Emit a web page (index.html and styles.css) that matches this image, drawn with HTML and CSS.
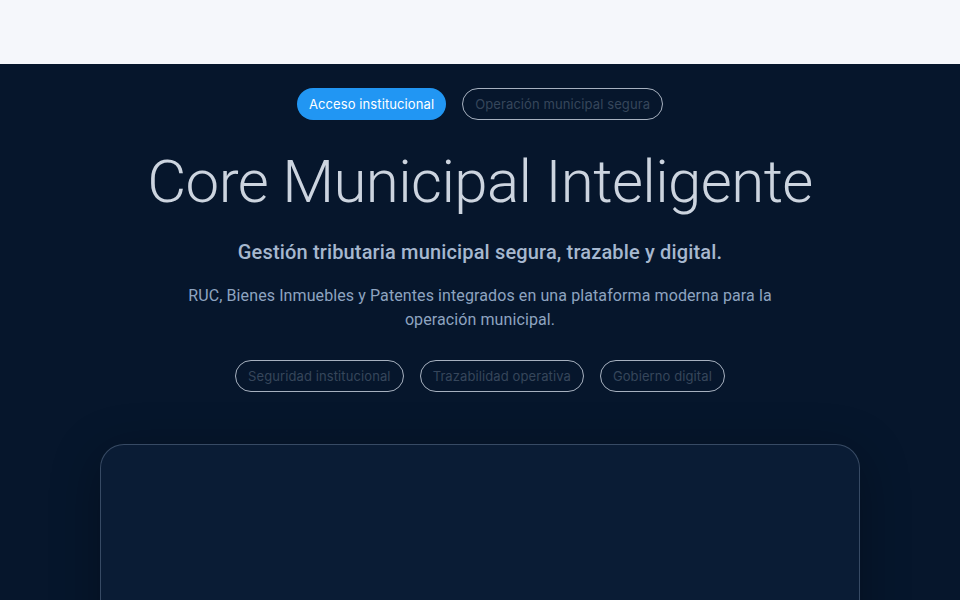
FILE: index.html
```html
<!DOCTYPE html>
<html lang="es">
<head>
<meta charset="utf-8">
<title>Core Municipal Inteligente</title>
<link rel="stylesheet" href="styles.css">
</head>
<body>
<header class="topbar"></header>
<section class="hero">
  <div class="badges">
    <span class="pill pill-primary">Acceso institucional</span>
    <span class="pill pill-outline">Operación municipal segura</span>
  </div>
  <h1 class="title">Core Municipal Inteligente</h1>
  <p class="subtitle">Gestión tributaria municipal segura, trazable y digital.</p>
  <p class="lead">RUC, Bienes Inmuebles y Patentes integrados en una plataforma moderna para la operación municipal.</p>
  <div class="chips">
    <span class="pill pill-outline">Seguridad institucional</span>
    <span class="pill pill-outline">Trazabilidad operativa</span>
    <span class="pill pill-outline">Gobierno digital</span>
  </div>
  <div class="card"></div>
</section>
</body>
</html>
```
FILE: styles.css
```css
* { box-sizing: border-box; }
html, body { margin: 0; padding: 0; }
body {
  font-family: Roboto, "Liberation Sans", sans-serif;
  background: #06162c;
  overflow: hidden;
  height: 600px;
}
.topbar {
  height: 64px;
  background: #f5f7fb;
}
.hero {
  background: #06162c;
  display: flex;
  flex-direction: column;
  align-items: center;
  padding-top: 24px;
  min-height: 536px;
}
.badges, .chips {
  display: flex;
  gap: 16px;
  justify-content: center;
}
.pill {
  display: inline-flex;
  align-items: center;
  height: 32px;
  padding: 0 12px;
  border-radius: 16px;
  font-family: Inter, "Noto Sans", sans-serif;
  font-size: 13px;
  letter-spacing: 0.1px;
  white-space: nowrap;
}
.pill-primary {
  background: #2196f3;
  color: #ffffff;
}
.pill-outline {
  border: 1px solid rgba(220, 228, 240, 0.75);
  color: #36465b;
}
.title {
  margin: 24px 0 0;
  font-weight: 300;
  font-size: 60px;
  line-height: 76px;
  color: #ccd4df;
  letter-spacing: -0.6px;
}
.subtitle {
  margin: 18px 0 0;
  font-size: 20px;
  font-weight: 500;
  line-height: 28px;
  letter-spacing: 0.15px;
  color: #a6b8cf;
}
.lead {
  margin: 18px 0 0;
  max-width: 600px;
  text-align: center;
  font-size: 16px;
  line-height: 24px;
  letter-spacing: 0.1px;
  color: #8ea4c0;
}
.chips { margin-top: 28px; }
.card {
  margin-top: 52px;
  width: 760px;
  height: 300px;
  border-radius: 24px;
  border: 1px solid rgba(140, 160, 190, 0.35);
  background: #0a1c35;
  box-shadow: 0 10px 50px rgba(0, 0, 0, 0.3);
}
```
